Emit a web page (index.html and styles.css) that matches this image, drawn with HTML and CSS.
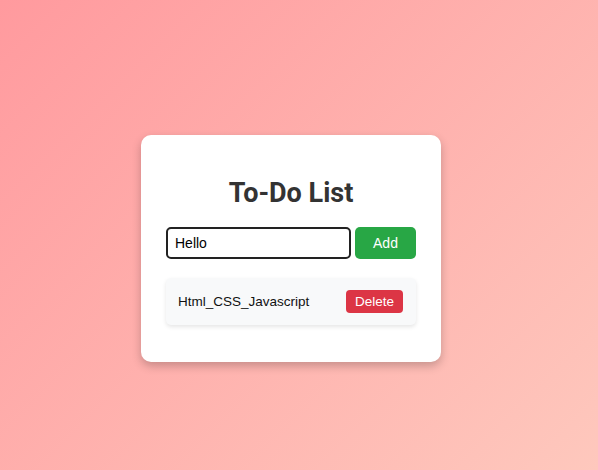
FILE: index.html
```html
<!DOCTYPE html>
<html lang="en">
<head>
<meta charset="UTF-8">
<title>To-Do List</title>
<link rel="stylesheet" href="styles.css">
</head>
<body>
  <div class="container">
    <h2 class="title">To-Do List</h2>
    <div class="input-row">
      <input class="task-input" type="text" value="Hello">
      <button class="add-btn">Add</button>
    </div>
    <ul class="task-list">
      <li class="task">
        <span class="task-text">Html_CSS_Javascript</span>
        <button class="delete-btn">Delete</button>
      </li>
    </ul>
  </div>
</body>
</html>
```

FILE: styles.css
```css
* { box-sizing: border-box; }

html, body {
  margin: 0;
  height: 100%;
}

body {
  font-family: "Liberation Sans", Arial, sans-serif;
  background: linear-gradient(135deg, #ff9a9e 0%, #fec8bd 100%);
  display: flex;
  justify-content: center;
  align-items: center;
  padding: 27px 16px 0 0;
}

.container {
  width: 300px;
  background: #ffffff;
  border-radius: 10px;
  padding: 25px;
  box-shadow: 0 4px 10px rgba(0, 0, 0, 0.22);
}

.title {
  font-family: Roboto, "Liberation Sans", sans-serif;
  font-weight: 700;
  font-size: 27px;
  line-height: 33px;
  color: #333333;
  text-align: center;
  margin: 17px 0 17px;
}

.input-row {
  display: flex;
  gap: 4px;
}

.task-input {
  width: 185px;
  height: 32px;
  border: 2px solid #222;
  border-radius: 5px;
  padding: 0 7px;
  font-family: "Liberation Sans", Arial, sans-serif;
  font-size: 14px;
  color: #000;
  outline: none;
}

.add-btn {
  flex: 1;
  height: 32px;
  border: none;
  border-radius: 5px;
  background: #28a745;
  color: #fff;
  font-family: "Liberation Sans", Arial, sans-serif;
  font-size: 14px;
}

.task-list {
  list-style: none;
  padding: 0;
  margin: 19px 0 12px;
}

.task {
  display: flex;
  justify-content: space-between;
  align-items: center;
  background: #f8f9fa;
  border-radius: 5px;
  padding: 12px 13px 12px 12px;
  box-shadow: 0 2px 4px rgba(0, 0, 0, 0.1);
  font-size: 13.5px;
  color: #111;
}

.delete-btn {
  height: 23px;
  width: 57px;
  border: none;
  border-radius: 4px;
  background: #dc3545;
  color: #fff;
  font-family: "Liberation Sans", Arial, sans-serif;
  font-size: 13.5px;
  padding: 0;
}
```
